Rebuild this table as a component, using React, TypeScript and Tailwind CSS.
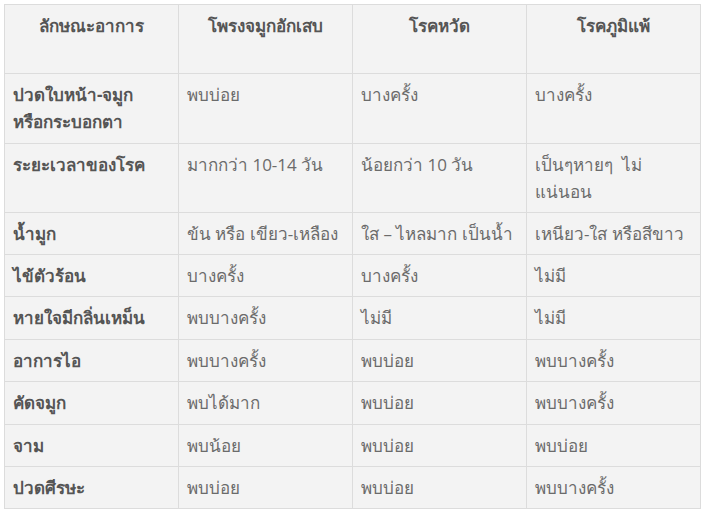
import React from "react";

const headers = ["ลักษณะอาการ", "โพรงจมูกอักเสบ", "โรคหวัด", "โรคภูมิแพ้"];

type Row = { h: string; cells: React.ReactNode[] };

const rows: Row[] = [
    { h: "h-[70px]", cells: [<>ปวดใบหน้า-จมูก<br />หรือกระบอกตา</>, "พบบ่อย", "บางครั้ง", "บางครั้ง"] },
    { h: "h-[69px]", cells: ["ระยะเวลาของโรค", "มากกว่า 10-14 วัน", "น้อยกว่า 10 วัน", "เป็นๆหายๆ\u00a0\u00a0ไม่แน่นอน"] },
    { h: "h-[42px]", cells: ["น้ำมูก", "ข้น หรือ เขียว-เหลือง", "ใส – ไหลมาก เป็นน้ำ", "เหนียว-ใส หรือสีขาว"] },
    { h: "h-[42px]", cells: ["ไข้ตัวร้อน", "บางครั้ง", "บางครั้ง", "ไม่มี"] },
    { h: "h-[43px]", cells: ["หายใจมีกลิ่นเหม็น", "พบบางครั้ง", "ไม่มี", "ไม่มี"] },
    { h: "h-[42px]", cells: ["อาการไอ", "พบบางครั้ง", "พบบ่อย", "พบบางครั้ง"] },
    { h: "h-[43px]", cells: ["คัดจมูก", "พบได้มาก", "พบบ่อย", "พบบางครั้ง"] },
    { h: "h-[42px]", cells: ["จาม", "พบน้อย", "พบบ่อย", "พบบ่อย"] },
    { h: "h-[42px]", cells: ["ปวดศีรษะ", "พบบ่อย", "พบบ่อย", "พบบางครั้ง"] },
];

export default function App() {
    return (
        <div className="w-[705px] h-[511px] bg-white pt-[4px] pl-[4px]" style={{ fontFamily: '"Open Sans", "Noto Sans", sans-serif' }}>
            <table className="w-[697px] table-fixed border-collapse bg-[#f3f3f3] text-[17px] leading-[27px]">
                <thead>
                    <tr className="h-[69px]">
                        {headers.map((h) => (
                            <th key={h} className="border border-[#dcdcdc] px-2 pt-[7px] align-top text-center font-bold text-[#555]">
                                {h}
                            </th>
                        ))}
                    </tr>
                </thead>
                <tbody>
                    {rows.map((r, i) => (
                        <tr key={i} className={r.h}>
                            {r.cells.map((c, j) => (
                                <td
                                    key={j}
                                    className={
                                        "border border-[#dcdcdc] px-2 py-[7px] align-top " +
                                        (j === 0 ? "font-bold text-[#555]" : "text-[#6b6b6b]")
                                    }
                                >
                                    {c}
                                </td>
                            ))}
                        </tr>
                    ))}
                </tbody>
            </table>
        </div>
    );
}
